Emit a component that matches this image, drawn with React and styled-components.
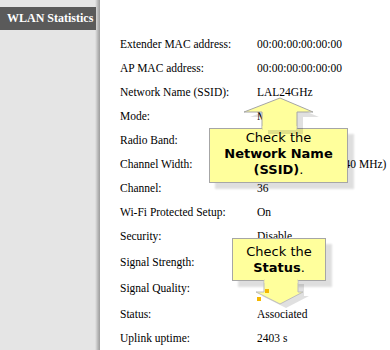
import React from "react";
import styled, { createGlobalStyle } from "styled-components";

const GlobalStyle = createGlobalStyle`
  html, body { margin: 0; padding: 0; background: #ffffff; }
  #root { width: 390px; height: 350px; }
`;

const Page = styled.div`
  position: relative;
  display: flex;
  width: 390px;
  height: 350px;
  overflow: hidden;
  background: #ffffff;
`;

const Sidebar = styled.aside`
  flex: 0 0 100px;
  padding-top: 7px;
  box-sizing: border-box;
  background: linear-gradient(
    to right,
    #e5e5e5 0px,
    #e5e5e5 95px,
    #d6d6d6 96px,
    #c6c6c6 97px,
    #b6b6b6 98px,
    #a9a9a9 99px,
    #9e9e9e 100px
  );
`;

const SidebarTitle = styled.div`
  width: 96px;
  height: 23px;
  box-sizing: border-box;
  padding-left: 7px;
  display: flex;
  align-items: center;
  background: #5a5a5a;
  color: #ffffff;
  font-family: "Liberation Serif", "Times New Roman", serif;
  font-weight: bold;
  font-size: 12px;
  white-space: nowrap;
`;

const Content = styled.main`
  flex: 1;
  min-width: 0;
  padding: 32px 0 0 20px;
`;

const StatsTable = styled.div`
  display: grid;
  grid-template-columns: 137px auto;
  font-family: "Liberation Serif", "Times New Roman", serif;
  font-size: 11.5px;
  color: #000000;
`;

const Label = styled.div`
  height: ${(p) => p.$h}px;
  display: flex;
  align-items: center;
  white-space: nowrap;
`;

const Value = styled(Label)``;

const Callout = styled.div`
  position: absolute;
  left: ${(p) => p.$x}px;
  top: ${(p) => p.$y}px;
  width: ${(p) => p.$w}px;
  display: flex;
  flex-direction: column;
`;

const Bubble = styled.div`
  position: relative;
  z-index: 1;
  height: ${(p) => p.$h}px;
  box-sizing: border-box;
  padding-top: ${(p) => p.$pt}px;
  border: 1px solid #a6a6a6;
  background: #ffff9c;
  box-shadow: 6px 6px 2px rgba(0, 0, 0, 0.13);
  font-family: "DejaVu Sans", Verdana, sans-serif;
  font-size: 13px;
  line-height: 16px;
  color: #000000;
  text-align: center;
  white-space: nowrap;
`;

const Strong = styled.b`
  font-weight: bold;
`;

const ArrowSvg = styled.svg`
  position: relative;
  z-index: 2;
  display: block;
  overflow: visible;
  margin: ${(p) => (p.$up ? "0 0 -1px 0" : "-1px 0 0 0")};
`;

const Handle = styled.span`
  position: absolute;
  z-index: 3;
  left: ${(p) => p.$x}px;
  top: ${(p) => p.$y}px;
  width: 4px;
  height: 4px;
  background: #f5b800;
`;

const rows = [
  ["Extender MAC address:", "00:00:00:00:00:00", 24],
  ["AP MAC address:", "00:00:00:00:00:00", 24],
  ["Network Name (SSID):", "LAL24GHz", 24],
  ["Mode:", "Mixed", 24],
  ["Radio Band:", "5 GHz", 24],
  ["Channel Width:", "Up to 1300 Mbps (40 MHz)", 24],
  ["Channel:", "36", 24],
  ["Wi-Fi Protected Setup:", "On", 24],
  ["Security:", "Disable", 24],
  ["Signal Strength:", "", 28],
  ["Signal Quality:", "", 24],
  ["Status:", "Associated", 28],
  ["Uplink uptime:", "2403 s", 20],
];

function UpArrow() {
  const pts = "71,0 104,14 88,14 88,31 53,31 53,14 35,14";
  return (
    <ArrowSvg $up width="139" height="31" viewBox="0 0 139 31">
      <polygon points={pts} fill="rgba(0,0,0,0.12)" transform="translate(6,5)" />
      <polygon points={pts} fill="#ffff9c" stroke="#a6a6a6" strokeWidth="1" />
      <rect x="53.5" y="28" width="34" height="4" fill="#ffff9c" />
    </ArrowSvg>
  );
}

function DownArrow() {
  const pts = "32,0 66,0 66,12 71,12 48,24 24,12 32,12";
  return (
    <ArrowSvg width="94" height="25" viewBox="0 0 94 25">
      <polygon points={pts} fill="rgba(0,0,0,0.12)" transform="translate(6,4)" />
      <polygon points={pts} fill="#ffff9c" stroke="#bdbdbd" strokeWidth="1" />
      <rect x="32.5" y="-1" width="33" height="4" fill="#ffff9c" />
    </ArrowSvg>
  );
}

export default function App() {
  return (
    <>
      <GlobalStyle />
      <Page>
        <Sidebar>
          <SidebarTitle>WLAN Statistics</SidebarTitle>
        </Sidebar>
        <Content>
          <StatsTable>
            {rows.map(([label, value, h]) => (
              <React.Fragment key={label}>
                <Label $h={h}>{label}</Label>
                <Value $h={h}>{value}</Value>
              </React.Fragment>
            ))}
          </StatsTable>
        </Content>

        <Callout $x={209} $y={98} $w={139}>
          <UpArrow />
          <Bubble $h={55} $pt={1}>
            Check the
            <br />
            <Strong>Network Name</Strong>
            <br />
            <Strong>(SSID)</Strong>.
          </Bubble>
        </Callout>

        <Callout $x={232} $y={238} $w={94}>
          <Bubble $h={43} $pt={5}>
            Check the
            <br />
            <Strong>Status</Strong>.
          </Bubble>
          <DownArrow />
        </Callout>

        <Handle $x={265} $y={289} />
        <Handle $x={257} $y={297} />
      </Page>
    </>
  );
}
